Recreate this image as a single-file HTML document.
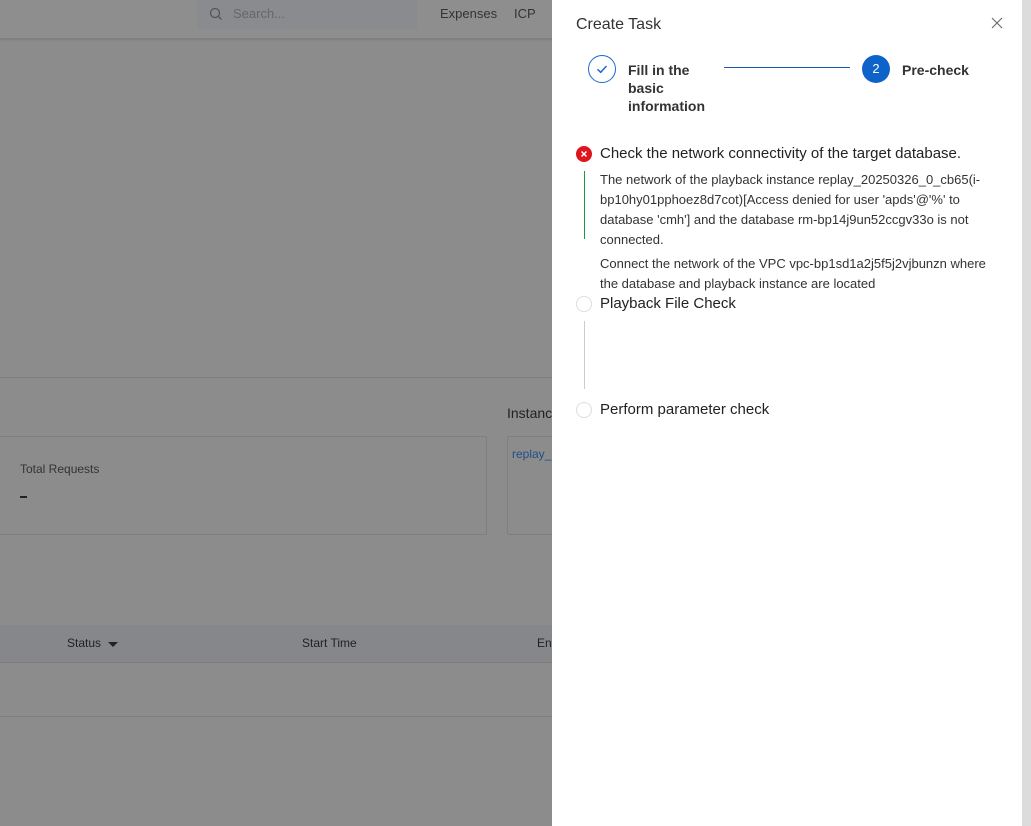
<!DOCTYPE html>
<html><head><meta charset="utf-8"><style>
*{margin:0;padding:0;box-sizing:border-box}
body{width:1031px;height:826px;position:relative;overflow:hidden;background:#8c8c8c;font-family:"Liberation Sans",Arial,sans-serif}
.a{position:absolute}
</style></head><body>
<!-- background page -->
<div class="a" style="left:0;top:0;width:552px;height:39px;background:#8e8e8e;border-bottom:1px solid #7f7f7f;box-shadow:0 1px 2px rgba(0,0,0,.1)"></div>
<div class="a" style="left:197px;top:0;width:220px;height:29px;background:#898b8f"></div>
<svg class="a" style="left:209px;top:7px" width="14" height="14" viewBox="0 0 14 14"><circle cx="6" cy="6" r="4.5" fill="none" stroke="#555" stroke-width="1.3"/><path d="M9.3 9.3L12.5 12.5" stroke="#555" stroke-width="1.3"/></svg>
<div class="a" style="left:233px;top:6px;font-size:13px;color:#666">Search...</div>
<div class="a" style="left:440px;top:6px;font-size:13px;color:#333">Expenses</div>
<div class="a" style="left:514px;top:6px;font-size:13px;color:#333">ICP</div>
<div class="a" style="left:0;top:377px;width:552px;height:1px;background:#7f7f7f"></div>
<div class="a" style="left:507px;top:405px;font-size:14px;color:#222">Instanc</div>
<div class="a" style="left:-2px;top:436px;width:489px;height:99px;border:1px solid #7f7f7f;border-radius:2px"></div>
<div class="a" style="left:20px;top:462px;font-size:12px;color:#333">Total Requests</div>
<div class="a" style="left:20px;top:496px;width:7px;height:2px;background:#222"></div>
<div class="a" style="left:507px;top:436px;width:50px;height:99px;border:1px solid #7f7f7f;border-radius:2px"></div>
<div class="a" style="left:512px;top:447px;font-size:12px;color:#1f4f86">replay_</div>
<div class="a" style="left:0;top:625px;width:552px;height:38px;background:#86878b;border-bottom:1px solid #7c7c7c"></div>
<div class="a" style="left:67px;top:636px;font-size:12px;color:#222">Status</div>
<div class="a" style="left:108px;top:642px;width:0;height:0;border-left:5px solid transparent;border-right:5px solid transparent;border-top:5px solid #222"></div>
<div class="a" style="left:302px;top:636px;font-size:12px;color:#222">Start Time</div>
<div class="a" style="left:537px;top:636px;font-size:12px;color:#222">En</div>
<div class="a" style="left:0;top:716px;width:552px;height:1px;background:#7f7f7f"></div>
<!-- drawer -->
<div class="a" style="left:552px;top:0;width:470px;height:826px;background:#fff"></div>
<div class="a" style="left:1022px;top:0;width:9px;height:826px;background:#dcdcdc"></div>
<div class="a" style="left:576px;top:16px;font-size:16px;color:#333">Create Task</div>
<svg class="a" style="left:991px;top:17px" width="12" height="12" viewBox="0 0 12 12"><path d="M1 1L11 11M11 1L1 11" stroke="#666" stroke-width="1.1"/></svg>
<div class="a" style="left:588px;top:55px;width:28px;height:28px;border:1px solid #1a6bd1;border-radius:50%"></div>
<svg class="a" style="left:595px;top:62px" width="14" height="14" viewBox="0 0 14 14"><path d="M2.5 7.3L5.7 10.3L11.5 4" fill="none" stroke="#1a6bd1" stroke-width="1.5"/></svg>
<div class="a" style="left:628px;top:61px;font-size:14px;font-weight:bold;color:#333;line-height:18px;width:90px">Fill in the basic information</div>
<div class="a" style="left:724px;top:67px;width:126px;height:1px;background:#1b58a8"></div>
<div class="a" style="left:862px;top:55px;width:28px;height:28px;background:#0d63c9;border-radius:50%;color:#fff;font-size:13px;text-align:center;line-height:28px">2</div>
<div class="a" style="left:902px;top:61px;font-size:14px;font-weight:bold;color:#333;line-height:18px">Pre-check</div>
<div class="a" style="left:576px;top:146px;width:16px;height:16px;background:#e0141e;border-radius:50%"></div>
<svg class="a" style="left:576px;top:146px" width="16" height="16" viewBox="0 0 16 16"><path d="M5.5 5.5L10.5 10.5M10.5 5.5L5.5 10.5" stroke="#fff" stroke-width="1.5"/></svg>
<div class="a" style="left:600px;top:145px;font-size:15px;color:#222">Check the network connectivity of the target database.</div>
<div class="a" style="left:584px;top:171px;width:1px;height:68px;background:#1a9b3c"></div>
<div class="a" style="left:600px;top:170px;width:392px;font-size:13px;color:#333;line-height:20px">The network of the playback instance replay_20250326_0_cb65(i-bp10hy01pphoez8d7cot)[Access denied for user 'apds'@'%' to database 'cmh'] and the database rm-bp14j9un52ccgv33o is not connected.</div>
<div class="a" style="left:600px;top:254px;width:395px;font-size:13px;color:#333;line-height:20px">Connect the network of the VPC vpc-bp1sd1a2j5f5j2vjbunzn where the database and playback instance are located</div>
<div class="a" style="left:576px;top:296px;width:16px;height:16px;border:1px solid #ddd;border-radius:50%"></div>
<div class="a" style="left:600px;top:295px;font-size:15px;color:#222">Playback File Check</div>
<div class="a" style="left:584px;top:321px;width:1px;height:68px;background:#ccc"></div>
<div class="a" style="left:576px;top:402px;width:16px;height:16px;border:1px solid #ddd;border-radius:50%"></div>
<div class="a" style="left:600px;top:401px;font-size:15px;color:#222">Perform parameter check</div>
</body></html>
